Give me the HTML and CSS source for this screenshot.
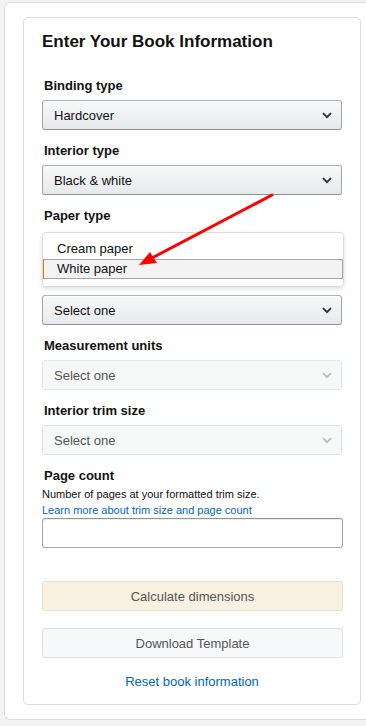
FILE: index.html
```html
<!DOCTYPE html>
<html lang="en">
<head>
    <meta charset="UTF-8">
    <meta name="viewport" content="width=device-width, initial-scale=1">
    <title>Enter Your Book Information</title>
    <link rel="stylesheet" href="styles.css">
</head>
<body>

<div class="panel">
    <div class="card">
        <h2>Enter Your Book Information</h2>

        <div class="field">
            <label class="label">Binding type</label>
            <div class="select">
                <span>Hardcover</span>
                <svg class="chevron" width="10" height="7" viewBox="0 0 10 7"><path d="M1 1.2 L5 5.2 L9 1.2" fill="none" stroke="currentColor" stroke-width="1.9"/></svg>
            </div>
        </div>

        <div class="field">
            <label class="label">Interior type</label>
            <div class="select">
                <span>Black &amp; white</span>
                <svg class="chevron" width="10" height="7" viewBox="0 0 10 7"><path d="M1 1.2 L5 5.2 L9 1.2" fill="none" stroke="currentColor" stroke-width="1.9"/></svg>
            </div>
        </div>

        <div class="field">
            <label class="label">Paper type</label>
            <!-- open dropdown list -->
            <ul class="dropdown">
                <li>Cream paper</li>
                <li class="active">White paper</li>
            </ul>
            <div class="select">
                <span>Select one</span>
                <svg class="chevron" width="10" height="7" viewBox="0 0 10 7"><path d="M1 1.2 L5 5.2 L9 1.2" fill="none" stroke="currentColor" stroke-width="1.9"/></svg>
            </div>
        </div>

        <div class="field">
            <label class="label">Measurement units</label>
            <div class="select disabled">
                <span>Select one</span>
                <svg class="chevron" width="10" height="7" viewBox="0 0 10 7"><path d="M1 1.2 L5 5.2 L9 1.2" fill="none" stroke="currentColor" stroke-width="1.9"/></svg>
            </div>
        </div>

        <div class="field">
            <label class="label">Interior trim size</label>
            <div class="select disabled">
                <span>Select one</span>
                <svg class="chevron" width="10" height="7" viewBox="0 0 10 7"><path d="M1 1.2 L5 5.2 L9 1.2" fill="none" stroke="currentColor" stroke-width="1.9"/></svg>
            </div>
        </div>

        <div class="field">
            <label class="label page-label">Page count</label>
            <p class="help">Number of pages at your formatted trim size.</p>
            <a class="help-link" href="#">Learn more about trim size and page count</a>
            <input class="text-input" type="text">
        </div>

        <button class="btn btn-calc" type="button">Calculate dimensions</button>
        <button class="btn btn-download" type="button">Download Template</button>
        <a class="reset" href="#">Reset book information</a>
    </div>
</div>

<!-- annotation arrow -->
<svg class="arrow" width="366" height="726" viewBox="0 0 366 726">
    <line x1="272" y1="195" x2="152" y2="258" stroke="#f00" stroke-width="3" stroke-linecap="round"/>
    <polygon points="139,265 150,252 157,263" fill="#f00"/>
</svg>

</body>
</html>
```

FILE: styles.css
```css
body {
    font-family: "Liberation Sans", Arial, sans-serif;
    background-color: #f3f3f3;
    margin: 0;
    padding: 2px 0 0 4px;
    overflow: hidden;
    color: #111;
}

.panel {
    background-color: #fff;
    border: 1px solid #ddd;
    border-right: none;
    border-radius: 6px 0 0 6px;
    padding: 14px 0 14px 18px;
}

.card {
    width: 300px;
    border: 1px solid #ddd;
    border-radius: 5px;
    padding: 13px 18px 13px 18px;
}

h2 {
    font-size: 17px;
    line-height: 22px;
    font-weight: 700;
    margin: 0 0 24px 0;
}

.field {
    margin-bottom: 12px;
}

.label {
    display: block;
    font-size: 13px;
    font-weight: 700;
    line-height: 18px;
    margin: 0 0 5px 2px;
}

.select {
    box-sizing: border-box;
    height: 30px;
    display: flex;
    align-items: center;
    justify-content: space-between;
    padding: 0 9px 0 11px;
    font-size: 13px;
    border: 1px solid #adb1b8;
    border-color: #adb1b8 #a2a6ac #8d9096;
    border-radius: 3px;
    background: linear-gradient(#f7f8fa, #e7e9ec);
    box-shadow: inset 0 1px 0 rgba(255, 255, 255, 0.6);
    color: #111;
}

.chevron {
    color: #333;
}

.select.disabled {
    background: #f7f8f8;
    border-color: #e3e6e6;
    color: #555;
    box-shadow: none;
}

.select.disabled .chevron {
    color: #bcbfbf;
}

.dropdown {
    list-style: none;
    margin: 7px -2px 8px 0;
    padding: 6px 0 7px 0;
    background-color: #fff;
    border: 1px solid #ddd;
    border-radius: 4px;
    box-shadow: 0 2px 4px rgba(0, 0, 0, 0.13);
    font-size: 13px;
}

.dropdown li {
    height: 18px;
    line-height: 18px;
    padding-left: 13px;
    border: 1px solid transparent;
}

.dropdown li.active {
    background-color: #f3f3f3;
    border-color: #a6a6a6;
    border-left-color: #e77600;
}

.page-label {
    margin-bottom: 1px;
}

.help {
    font-size: 11px;
    line-height: 16px;
    margin: 0;
    color: #111;
}

.help-link {
    display: block;
    font-size: 11px;
    line-height: 16px;
    color: #0066c0;
    text-decoration: none;
}

.text-input {
    box-sizing: border-box;
    display: block;
    width: 301px;
    height: 30px;
    margin: 0;
    border: 1px solid #a6a6a6;
    border-top-color: #949494;
    border-radius: 3px;
    box-shadow: inset 0 1px 0 rgba(0, 0, 0, 0.07);
    background-color: #fff;
}

.btn {
    display: block;
    box-sizing: border-box;
    width: 301px;
    height: 30px;
    font-family: inherit;
    font-size: 13px;
    color: #555;
    border-radius: 3px;
    cursor: pointer;
}

.btn-calc {
    margin-top: 33px;
    background-color: #f8f1e2;
    border: 1px solid #ebdfc6;
}

.btn-download {
    margin-top: 17px;
    background-color: #f7f8fa;
    border: 1px solid #dcdfe3;
}

.reset {
    display: block;
    text-align: center;
    font-size: 13px;
    line-height: 18px;
    margin-top: 15px;
    color: #0066c0;
    text-decoration: none;
}

.arrow {
    position: absolute;
    left: 0;
    top: 0;
    pointer-events: none;
}
```
